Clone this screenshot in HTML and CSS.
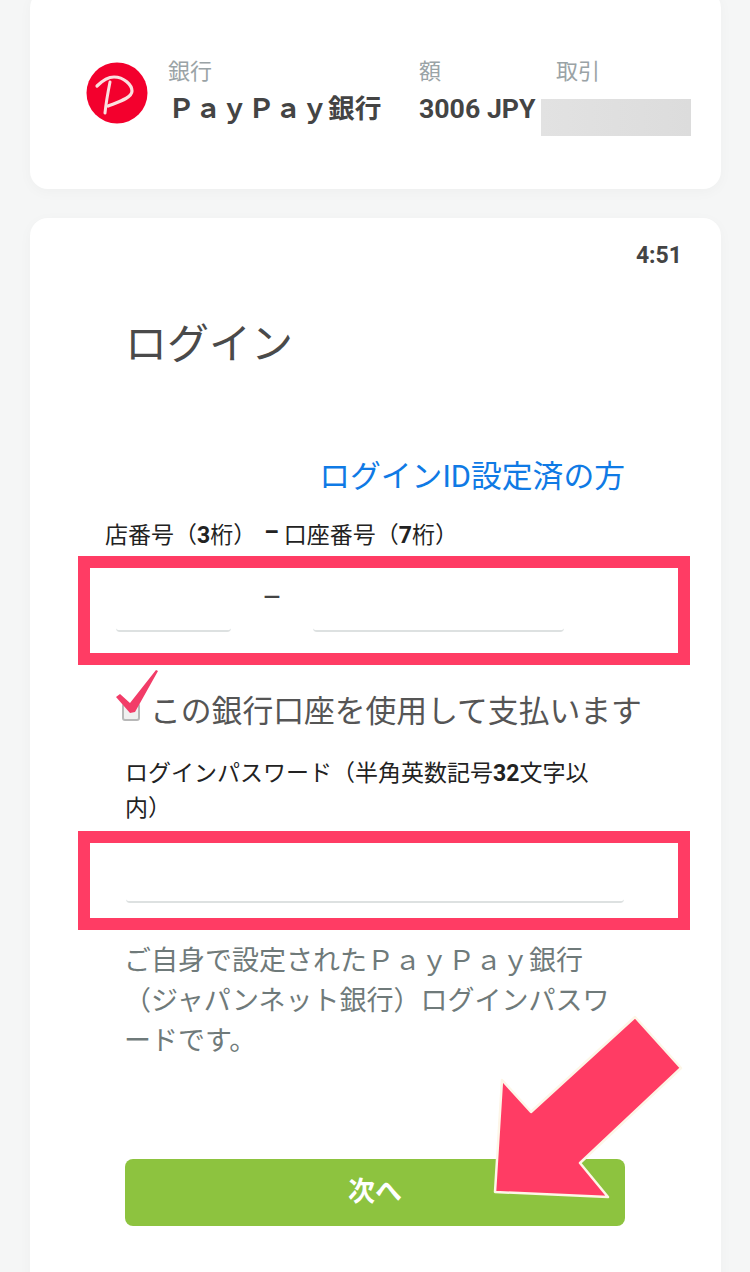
FILE: index.html
```html
<!DOCTYPE html>
<html lang="ja">
<head>
    <meta charset="UTF-8">
    <meta name="viewport" content="width=device-width, initial-scale=1.0">
    <title>ログイン</title>
    <link rel="stylesheet" href="styles.css">
</head>
<body>
    <section class="card summary">
        <svg class="bank-logo" viewBox="0 0 62 62">
            <circle cx="31" cy="31" r="30.5" fill="#f3002d"/>
            <path d="M11 24C17 18 22 15 28 15C38 15 46 23 46 29C46 36 32 40 22 44" fill="none" stroke="#fbe0e0" stroke-width="3.2" stroke-linecap="round"/>
            <path d="M24 20C22 30 20 41 19 51" fill="none" stroke="#fbe0e0" stroke-width="3" stroke-linecap="round"/>
        </svg>
        <div class="col col-bank">
            <div class="col-label">銀行</div>
            <div class="col-value">ＰａｙＰａｙ銀行</div>
        </div>
        <div class="col col-amount">
            <div class="col-label">額</div>
            <div class="col-value">3006 JPY</div>
        </div>
        <div class="col col-trade">
            <div class="col-label">取引</div>
            <div class="redacted"></div>
        </div>
    </section>

    <section class="card login">
        <div class="timer">4:51</div>
        <form class="login-form">
            <h1 class="title">ログイン</h1>
            <a class="id-link" href="#">ログインID設定済の方</a>
            <label class="field-label account-label">店番号（<b>3</b>桁）<span class="label-dash">–</span>口座番号（<b>7</b>桁）</label>
            <div class="mark-box account-box">
                <input class="line-input branch-input" type="text">
                <span class="input-dash">–</span>
                <input class="line-input account-input" type="text">
            </div>
            <label class="use-account">
                <input class="use-check" type="checkbox">
                <span>この銀行口座を使用して支払います</span>
            </label>
            <label class="field-label password-label">ログインパスワード（半角英数記号<b>32</b>文字以<br>内）</label>
            <div class="mark-box password-box">
                <input class="line-input password-input" type="password">
            </div>
            <p class="help">ご自身で設定されたＰａｙＰａｙ銀行（ジャパンネット銀行）ログインパスワードです。</p>
            <button class="next-button" type="button">次へ</button>
        </form>
    </section>

    <svg class="check-mark" viewBox="0 0 50 50">
        <path d="M1 27L5 24L15 33L41 0L43 1L20 42L15 43Z" fill="#f23c68"/>
    </svg>
    <svg class="big-arrow" viewBox="0 0 200 190">
        <path d="M145 2L191 53L90 148L118 182L5 177L12 65L41 97Z" fill="#ff3c64" stroke="#fdf6e8" stroke-width="2.5" stroke-linejoin="round"/>
    </svg>
</body>
</html>
```

FILE: styles.css
```css
:root {
    --mark-color: #ff3c64;
    --text-color: #444;
    --muted-color: #9aa3a6;
    --jp-font: Roboto, "Noto Sans CJK JP", sans-serif;
}

* {
    margin: 0;
    padding: 0;
    box-sizing: border-box;
}

html, body {
    height: 1272px;
    overflow: hidden;
}

body {
    position: relative;
    padding: 0 29px 0 30px;
    background-color: #f5f6f6;
    color: var(--text-color);
    font-family: var(--jp-font);
}

.card {
    background-color: #fff;
    border-radius: 18px;
    box-shadow: 0 3px 14px rgba(0, 0, 0, 0.03);
}

.summary {
    display: flex;
    align-items: flex-start;
    height: 199px;
    margin-top: -10px;
    padding: 67px 0 0 56px;
}

.bank-logo {
    width: 62px;
    height: 62px;
    margin: 5px 20px 0 0;
}

.col-label {
    font-size: 22px;
    line-height: 30px;
    color: var(--muted-color);
}

.col-value {
    margin-top: 4px;
    font-size: 26.7px;
    line-height: 36px;
    font-weight: 700;
    white-space: nowrap;
}

.col-bank {
    width: 251px;
}

.col-amount {
    width: 122px;
}

.col-trade {
    width: 150px;
}

.col-trade .col-label {
    padding-left: 15px;
}

.redacted {
    height: 37px;
    margin-top: 12px;
    background: linear-gradient(90deg, #e2e2e2, #dcdcdc);
}

.login {
    margin-top: 29px;
    height: 1100px;
    padding-top: 23px;
}

.timer {
    padding-right: 39px;
    text-align: right;
    font-size: 23px;
    line-height: 30px;
    font-weight: 700;
}

.login-form {
    display: flex;
    flex-direction: column;
    width: 500px;
    margin-left: 95px;
}

.title {
    margin-top: 44px;
    font-size: 42px;
    line-height: 60px;
    font-weight: 400;
    color: #4a4a4a;
}

.id-link {
    margin-top: 82px;
    text-align: right;
    font-size: 30.8px;
    line-height: 40px;
    color: #0f7ae5;
    text-decoration: none;
    white-space: nowrap;
}

.field-label {
    font-size: 23px;
    color: #222;
}

.field-label b {
    font-weight: 700;
}

.account-label {
    margin: 24px 0 0 -20px;
    line-height: 30px;
    white-space: nowrap;
}

.label-dash {
    position: relative;
    top: -3px;
    padding: 0 5px 0 8px;
    font-weight: 700;
}

.mark-box {
    display: flex;
    align-items: flex-end;
    width: 612px;
    margin-left: -47px;
    background-color: #fff;
    border: 12px solid var(--mark-color);
}

.account-box {
    height: 109px;
    margin-top: 5px;
    padding: 0 0 21px 26px;
}

.password-box {
    height: 99px;
    margin-top: 5px;
    padding: 0 0 15px 36px;
}

.line-input {
    height: 40px;
    background: transparent;
    border: none;
    border-bottom: 2px solid #dde1e1;
    border-radius: 0 0 4px 4px;
    outline: none;
}

.branch-input {
    width: 115px;
}

.input-dash {
    width: 82px;
    align-self: flex-start;
    margin-top: 12px;
    text-align: center;
    font-size: 30px;
    line-height: 34px;
    color: #444;
}

.account-input {
    width: 251px;
}

.password-input {
    width: 498px;
}

.use-account {
    display: flex;
    align-items: center;
    margin: 27px 0 0 -3px;
    font-size: 30.8px;
    line-height: 40px;
    color: #555;
    white-space: nowrap;
}

.use-check {
    appearance: none;
    flex-shrink: 0;
    width: 18px;
    height: 18px;
    margin-right: 10px;
    background-color: #f0f0f0;
    border: 2px solid #b8b8b8;
    border-radius: 3px;
}

.password-label {
    margin-top: 24px;
    line-height: 35px;
    white-space: nowrap;
}

.help {
    width: 501px;
    margin: 11px 0 0 -1px;
    font-size: 27px;
    line-height: 40px;
    color: #6f7a7a;
}

.next-button {
    height: 67px;
    margin-top: 98px;
    padding-bottom: 6px;
    background-color: #8dc33f;
    border: none;
    border-radius: 8px;
    color: #fff;
    font-family: var(--jp-font);
    font-size: 27px;
    font-weight: 700;
}

.check-mark {
    position: absolute;
    left: 115px;
    top: 670px;
    width: 50px;
    height: 50px;
}

.big-arrow {
    position: absolute;
    left: 490px;
    top: 1015px;
    width: 200px;
    height: 190px;
}
```
